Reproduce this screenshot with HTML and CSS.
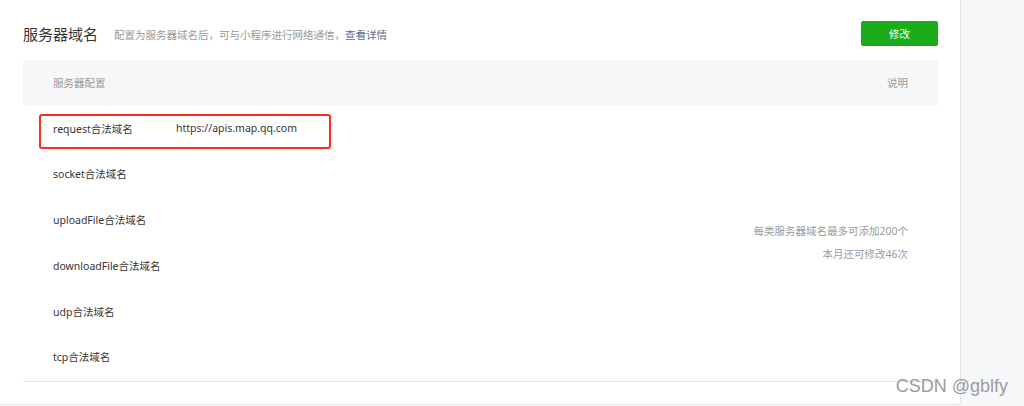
FILE: index.html
```html
<!DOCTYPE html>
<html lang="zh-CN">
<head>
    <meta charset="UTF-8">
    <meta name="viewport" content="width=device-width, initial-scale=1.0">
    <title>服务器域名</title>
    <link rel="stylesheet" href="styles.css">
</head>
<body>
    <div class="page">
        <div class="card">
            <div class="head">
                <h2 class="title">服务器域名</h2>
                <p class="desc">配置为服务器域名后，可与小程序进行网络通信，<a href="#">查看详情</a></p>
                <button type="button" class="btn-primary">修改</button>
            </div>
            <table class="domain-table">
                <thead>
                    <tr>
                        <th class="col-config">服务器配置</th>
                        <th class="col-tips">说明</th>
                    </tr>
                </thead>
                <tbody>
                    <tr>
                        <td>
                            <div class="item highlight">
                                <span class="label">request合法域名</span>
                                <span class="value">https://apis.map.qq.com</span>
                            </div>
                        </td>
                        <td class="tips" rowspan="6">
                            <p>每类服务器域名最多可添加200个</p>
                            <p>本月还可修改46次</p>
                        </td>
                    </tr>
                    <tr><td><div class="item"><span class="label">socket合法域名</span></div></td></tr>
                    <tr><td><div class="item"><span class="label">uploadFile合法域名</span></div></td></tr>
                    <tr><td><div class="item"><span class="label">downloadFile合法域名</span></div></td></tr>
                    <tr><td><div class="item"><span class="label">udp合法域名</span></div></td></tr>
                    <tr><td><div class="item"><span class="label">tcp合法域名</span></div></td></tr>
                </tbody>
            </table>
        </div>
        <div class="side"></div>
    </div>
    <div class="watermark">CSDN @gblfy</div>
</body>
</html>
```

FILE: styles.css
```css
:root {
    --green: #1aad19;
    --link: #576b95;
    --gray-bg: #f6f7f9;
    --line: #e4e6ea;
    --text: #353535;
    --muted: #9a9a9a;
}

* {
    box-sizing: border-box;
    margin: 0;
    padding: 0;
}

body {
    font-family: "Noto Sans", "Noto Sans CJK SC", sans-serif;
    font-size: 10.5px;
    color: var(--text);
    background-color: var(--gray-bg);
    overflow: hidden;
}

.page {
    display: flex;
    height: 406px;
}

.card {
    width: 961px;
    height: 405px;
    padding: 0 22px 0 23px;
    background-color: #fff;
    border-right: 1px solid var(--line);
    border-bottom: 1px solid var(--line);
    border-radius: 0 0 4px 0;
}

.side {
    flex: 1;
}

.head {
    display: flex;
    align-items: center;
    height: 60px;
    padding-top: 7px;
}

.title {
    font-size: 15px;
    font-weight: normal;
    color: #353535;
    margin-right: 16px;
}

.desc {
    flex: 1;
    color: var(--muted);
    padding-top: 2px;
}

.desc a {
    color: var(--link);
    text-decoration: none;
}

.btn-primary {
    width: 77px;
    height: 25px;
    border: none;
    border-radius: 2px;
    background-color: var(--green);
    color: #fff;
    font-family: inherit;
    font-size: 10.5px;
    cursor: pointer;
}

.domain-table {
    width: 100%;
    border-collapse: collapse;
    border-bottom: 1px solid var(--line);
}

.domain-table th {
    height: 45px;
    background-color: var(--gray-bg);
    font-weight: normal;
    color: var(--muted);
    text-align: left;
    padding: 0 30px;
}

.domain-table th.col-tips {
    text-align: right;
}

.domain-table td {
    height: 46px;
    padding: 0 16px;
}

.item {
    display: flex;
    align-items: center;
    height: 35px;
    padding-left: 14px;
    margin-top: -2px;
}

.item.highlight {
    border: 2px solid #fa2a1c;
    border-radius: 3px;
    width: 292px;
    padding-left: 12px;
    padding-bottom: 6px;
    margin-top: 6px;
}

.label {
    width: 123px;
}

.tips {
    text-align: right;
    vertical-align: middle;
    color: var(--muted);
    line-height: 23px;
}

.domain-table td.tips {
    padding-right: 30px;
}

.watermark {
    position: absolute;
    right: 16px;
    bottom: 9px;
    font-family: "Liberation Sans", sans-serif;
    font-size: 18px;
    color: #9c9c9c;
}
```
